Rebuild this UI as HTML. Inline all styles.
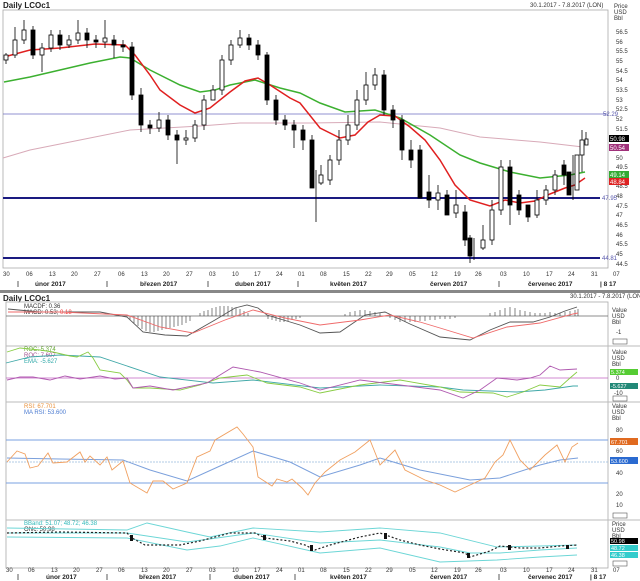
<!DOCTYPE html>
<html><head><meta charset="utf-8"><style>
html,body{margin:0;padding:0;background:#fff;width:640px;height:581px;overflow:hidden}
svg{display:block;font-family:"Liberation Sans",sans-serif}
.t{font-size:6px;fill:#333}
.h{font-size:8px;font-weight:bold;fill:#222}
.m{font-size:6.5px;font-weight:bold;fill:#222}
</style></head><body>
<svg width="640" height="581" viewBox="0 0 640 581" xmlns="http://www.w3.org/2000/svg">
<rect width="640" height="581" fill="#fff"/>
<!-- top header -->
<text x="3" y="8" class="h">Daily LCOc1</text>
<text x="530" y="7" class="t">30.1.2017 - 7.8.2017 (LON)</text>
<rect x="3" y="10" width="605" height="258" fill="none" stroke="#aaa" stroke-width="0.8"/>
<!-- right axis -->
<g class="t">
<text x="614" y="8">Price</text><text x="614" y="14">USD</text><text x="614" y="20">Bbl</text>
<text x="616" y="34">56.5</text><text x="616" y="44">56</text><text x="616" y="53">55.5</text><text x="616" y="63">55</text><text x="616" y="73">54.5</text><text x="616" y="82">54</text><text x="616" y="92">53.5</text><text x="616" y="102">53</text><text x="616" y="111">52.5</text><text x="616" y="121">52</text><text x="616" y="131">51.5</text><text x="616" y="140">51</text><text x="616" y="169">49.5</text><text x="616" y="160">50</text><text x="616" y="188">48.5</text><text x="616" y="198">48</text><text x="616" y="208">47.5</text><text x="616" y="217">47</text><text x="616" y="227">46.5</text><text x="616" y="237">46</text><text x="616" y="246">45.5</text><text x="616" y="256">45</text><text x="616" y="266">44.5</text>
</g>
<rect x="609" y="135" width="20" height="7" fill="#000"/><text x="610" y="141" style="font-size:6px;fill:#fff">50.98</text>
<rect x="609" y="144" width="20" height="7" fill="#a0307a"/><text x="610" y="150" style="font-size:6px;fill:#fff">50.54</text>
<rect x="609" y="171" width="20" height="7" fill="#3a3"/><text x="610" y="177" style="font-size:6px;fill:#fff">49.14</text>
<rect x="609" y="178" width="20" height="7" fill="#d22"/><text x="610" y="184" style="font-size:6px;fill:#fff">48.84</text>
<!-- horizontal lines -->
<line x1="3" y1="114" x2="608" y2="114" stroke="#6c6cc0" stroke-width="0.8"/>
<text x="603" y="116" style="font-size:6px;fill:#55a">52.29</text>
<line x1="3" y1="198" x2="600" y2="198" stroke="#1a1a80" stroke-width="2"/>
<text x="602" y="200" style="font-size:6px;fill:#55a">47.95</text>
<line x1="3" y1="258" x2="600" y2="258" stroke="#1a1a80" stroke-width="2"/>
<text x="602" y="260" style="font-size:6px;fill:#55a">44.81</text>
<!-- MAs -->
<polyline fill="none" stroke="#d8aab8" stroke-width="1" points="3,158 30,150 80,140 130,130 200,126 240,123 310,123 380,122 440,128 480,137 540,142 583,147"/>
<polyline fill="none" stroke="#3cb030" stroke-width="1.5" points="4,82 30,77 60,70 90,63 120,57 130,58 150,70 180,85 200,92 215,90 230,85 255,80 280,88 300,93 320,103 345,112 375,110 400,118 430,135 460,155 480,163 510,172 540,178 570,175 585,172"/>
<polyline fill="none" stroke="#e02020" stroke-width="1.5" points="4,57 30,50 60,48 95,44 125,45 135,55 150,75 160,90 180,105 195,113 210,108 230,92 245,81 258,78 270,85 290,98 300,103 320,128 340,138 355,135 368,122 380,115 395,116 410,127 425,140 440,160 455,185 470,200 490,206 505,200 520,203 535,201 550,194 565,188 575,185 585,178"/>
<!-- candles wicks -->
<path fill="none" stroke="#000" stroke-width="0.8" d="M6,53V64M15,27V58M24,20V44M33,26V59M42,43V72M51,30V52M60,30V50M69,35V48M78,20V44M87,28V48M96,35V48M105,20V48M114,35V58M123,40V52M132,42V100M141,88V132M150,120V134M159,112V132M168,115V140M177,130V164M186,130V145M195,120V142M204,95V130M213,85V96M222,55V95M231,40V65M240,30V48M249,34V50M258,40V60M267,52V105M276,95V125M285,115V130M294,120V148M303,125V150M312,135V175M316,170V222M321,165V185M330,155V185M339,130V165M348,115V145M357,90V130M366,72V105M375,68V90M384,70V115M393,105V128M402,115V160M411,140V168M420,145V185M429,175V208M438,185V210M447,190V210M456,190V218M465,205V246M470,235V263M474,238V260M483,225V250M492,200V245M501,160V215M510,160V225M519,190V215M528,205V222M537,190V218M546,185V205M555,170V195M564,160V185M573,155V200M582,130V172M586,132V145"/>
<g stroke="#000" stroke-width="0.8">
<rect x="4" y="55" width="4" height="5" fill="#fff"/>
<rect x="13" y="40" width="4" height="15" fill="#fff"/>
<rect x="22" y="30" width="4" height="10" fill="#fff"/>
<rect x="31" y="30" width="4" height="25" fill="#000"/>
<rect x="40" y="48" width="4" height="7" fill="#fff"/>
<rect x="49" y="35" width="4" height="13" fill="#fff"/>
<rect x="58" y="35" width="4" height="10" fill="#000"/>
<rect x="67" y="40" width="4" height="5" fill="#fff"/>
<rect x="76" y="33" width="4" height="7" fill="#fff"/>
<rect x="85" y="33" width="4" height="7" fill="#000"/>
<rect x="94" y="40" width="4" height="2" fill="#000"/>
<rect x="103" y="38" width="4" height="4" fill="#fff"/>
<rect x="112" y="40" width="4" height="5" fill="#000"/>
<rect x="121" y="45" width="4" height="2" fill="#000"/>
<rect x="130" y="47" width="4" height="48" fill="#000"/>
<rect x="139" y="95" width="4" height="30" fill="#000"/>
<rect x="148" y="125" width="4" height="3" fill="#000"/>
<rect x="157" y="120" width="4" height="8" fill="#fff"/>
<rect x="166" y="120" width="4" height="15" fill="#000"/>
<rect x="175" y="135" width="4" height="5" fill="#000"/>
<rect x="184" y="138" width="4" height="2" fill="#fff"/>
<rect x="193" y="125" width="4" height="13" fill="#fff"/>
<rect x="202" y="100" width="4" height="25" fill="#fff"/>
<rect x="211" y="90" width="4" height="10" fill="#fff"/>
<rect x="220" y="60" width="4" height="30" fill="#fff"/>
<rect x="229" y="45" width="4" height="15" fill="#fff"/>
<rect x="238" y="38" width="4" height="7" fill="#fff"/>
<rect x="247" y="38" width="4" height="7" fill="#000"/>
<rect x="256" y="45" width="4" height="10" fill="#000"/>
<rect x="265" y="55" width="4" height="45" fill="#000"/>
<rect x="274" y="100" width="4" height="20" fill="#000"/>
<rect x="283" y="120" width="4" height="5" fill="#000"/>
<rect x="292" y="125" width="4" height="5" fill="#000"/>
<rect x="301" y="130" width="4" height="10" fill="#000"/>
<rect x="310" y="140" width="4" height="48" fill="#000"/>
<rect x="319" y="175" width="4" height="8" fill="#fff"/>
<rect x="328" y="160" width="4" height="20" fill="#fff"/>
<rect x="337" y="140" width="4" height="20" fill="#fff"/>
<rect x="346" y="125" width="4" height="15" fill="#fff"/>
<rect x="355" y="100" width="4" height="25" fill="#fff"/>
<rect x="364" y="85" width="4" height="15" fill="#fff"/>
<rect x="373" y="75" width="4" height="10" fill="#fff"/>
<rect x="382" y="75" width="4" height="35" fill="#000"/>
<rect x="391" y="110" width="4" height="10" fill="#000"/>
<rect x="400" y="120" width="4" height="30" fill="#000"/>
<rect x="409" y="150" width="4" height="10" fill="#000"/>
<rect x="418" y="150" width="4" height="48" fill="#000"/>
<rect x="427" y="192" width="4" height="8" fill="#000"/>
<rect x="436" y="193" width="4" height="7" fill="#fff"/>
<rect x="445" y="195" width="4" height="20" fill="#000"/>
<rect x="454" y="205" width="4" height="8" fill="#fff"/>
<rect x="463" y="212" width="4" height="28" fill="#000"/>
<rect x="468" y="238" width="4" height="18" fill="#000"/>
<rect x="481" y="240" width="4" height="8" fill="#fff"/>
<rect x="490" y="210" width="4" height="30" fill="#fff"/>
<rect x="499" y="167" width="4" height="43" fill="#fff"/>
<rect x="508" y="167" width="4" height="38" fill="#000"/>
<rect x="517" y="195" width="4" height="15" fill="#000"/>
<rect x="526" y="205" width="4" height="12" fill="#000"/>
<rect x="535" y="200" width="4" height="15" fill="#fff"/>
<rect x="544" y="190" width="4" height="10" fill="#fff"/>
<rect x="553" y="175" width="4" height="15" fill="#fff"/>
<rect x="562" y="165" width="4" height="10" fill="#000"/>
<rect x="567" y="172" width="4" height="23" fill="#000"/>
<rect x="575" y="155" width="4" height="35" fill="#fff"/>
<rect x="580" y="140" width="4" height="15" fill="#fff"/>
<rect x="585" y="139" width="3" height="6" fill="#fff"/>
</g>
<!-- top date axis -->
<g class="t">
<text x="3" y="276">30</text><text x="26" y="276">06</text><text x="49" y="276">13</text><text x="71" y="276">20</text><text x="94" y="276">27</text><text x="118" y="276">06</text><text x="141" y="276">13</text><text x="163" y="276">20</text><text x="186" y="276">27</text><text x="209" y="276">03</text><text x="232" y="276">10</text><text x="254" y="276">17</text><text x="276" y="276">24</text><text x="298" y="276">01</text><text x="320" y="276">08</text><text x="343" y="276">15</text><text x="365" y="276">22</text><text x="386" y="276">29</text><text x="409" y="276">05</text><text x="431" y="276">12</text><text x="454" y="276">19</text><text x="475" y="276">26</text><text x="500" y="276">03</text><text x="523" y="276">10</text><text x="546" y="276">17</text><text x="568" y="276">24</text><text x="591" y="276">31</text><text x="613" y="276">07</text>
</g>
<g class="m">
<text x="35" y="286">únor 2017</text><text x="140" y="286">březen 2017</text><text x="235" y="286">duben 2017</text><text x="330" y="286">květen 2017</text><text x="430" y="286">červen 2017</text><text x="528" y="286">červenec 2017</text><text x="600" y="286">| 8 17</text>
</g>
<path stroke="#333" stroke-width="0.8" d="M18,281V287M107,281V287M208,281V287M298,281V287M499,281V287"/>
<rect x="0" y="290" width="640" height="3" fill="#888"/>
<!-- lower header -->
<text x="3" y="301" class="h">Daily LCOc1</text>
<text x="570" y="298" class="t">30.1.2017 - 7.8.2017 (LON)</text>
<rect x="6" y="302" width="602" height="266" fill="none" stroke="#aaa" stroke-width="0.8"/>
<line x1="6" y1="346" x2="640" y2="346" stroke="#bbb"/>
<line x1="6" y1="402" x2="640" y2="402" stroke="#bbb"/>
<line x1="6" y1="520" x2="640" y2="520" stroke="#bbb"/>
<!-- MACD -->
<text x="24" y="308" class="t">MACDF: 0.36</text>
<text x="24" y="314" class="t">MACD: 0.53; <tspan fill="#e33">0.18</tspan></text>
<line x1="6" y1="316" x2="608" y2="316" stroke="#666" stroke-width="0.8"/>
<path stroke="#333" stroke-width="0.6" d="M130,316V320M134,316V323M138,316V326M142,316V329M146,316V331M150,316V332M154,316V332M158,316V331M162,316V330M166,316V329M170,316V328M174,316V327M178,316V326M182,316V325M186,316V323M190,316V321M200,316V313M204,316V311M208,316V310M212,316V308M216,316V307M220,316V306M224,316V306M228,316V306M232,316V307M236,316V308M240,316V309M244,316V311M248,316V313M268,316V319M272,316V320M276,316V321M280,316V322M284,316V322M288,316V321M292,316V320M296,316V319M300,316V318M345,316V314M350,316V312M355,316V311M360,316V310M365,316V310M370,316V311M375,316V312M380,316V313M390,316V318M395,316V320M400,316V322M405,316V322M410,316V322M415,316V322M420,316V321M425,316V321M430,316V320M435,316V320M440,316V319M445,316V319M450,316V319M455,316V318M490,316V313M495,316V312M500,316V310M505,316V308M510,316V307M515,316V308M520,316V310M525,316V311M530,316V312M535,316V313M540,316V313M545,316V313M550,316V312M555,316V313M560,316V313M565,316V312M570,316V311M575,316V310M578,316V309"/>
<polyline fill="none" stroke="#555" stroke-width="0.9" points="8,309 40,312 100,312 127,317 143,332 165,335 187,336 215,320 235,308 247,305 258,308 267,315 300,325 320,333 340,332 365,315 385,312 410,324 440,337 470,340 490,330 510,322 533,322 550,317 565,311 577,307"/>
<polyline fill="none" stroke="#ef6a6a" stroke-width="0.9" points="8,312 60,312 127,315 160,327 193,333 225,320 253,310 285,318 320,325 360,320 390,315 420,322 440,328 473,338 507,327 540,323 573,314 578,313"/>
<g class="t"><text x="612" y="312">Value</text><text x="612" y="318">USD</text><text x="612" y="324">Bbl</text><text x="616" y="334">-1</text></g>
<rect x="613" y="339" width="14" height="5" fill="none" stroke="#555" stroke-width="0.6"/>
<!-- ROC -->
<g class="t"><text x="24" y="351" fill="#3a3" style="fill:#6a3">ROC: 5.374</text><text x="24" y="357" style="fill:#a05090">ROC: 7.607</text><text x="24" y="363" style="fill:#3aa">EMA: -5.627</text></g>
<line x1="6" y1="378" x2="608" y2="378" stroke="#c060c0" stroke-width="0.8"/>
<polyline fill="none" stroke="#40a8a8" stroke-width="0.9" points="6,363 30,357 60,355 100,357 160,377 213,383 253,380 320,388 380,385 440,387 463,390 517,392 545,390 573,386 578,386"/>
<polyline fill="none" stroke="#8c4" stroke-width="0.9" points="7,352 20,348 40,350 53,352 70,356 77,357 88,352 93,358 100,370 120,373 127,380 133,388 150,388 180,390 200,385 220,378 247,375 267,383 300,387 320,393 360,385 400,380 440,387 460,392 493,393 507,397 523,392 540,385 560,387 570,378 577,372"/>
<polyline fill="none" stroke="#b05ab0" stroke-width="0.9" points="7,380 20,377 33,377 50,380 65,376 80,379 100,376 115,379 127,378 133,388 150,386 173,390 207,383 233,367 260,372 300,383 320,390 360,380 400,385 440,390 463,398 480,390 497,378 517,380 530,378 540,375 550,366 560,370 577,369"/>
<g class="t"><text x="612" y="354">Value</text><text x="612" y="360">USD</text><text x="612" y="366">Bbl</text><text x="616" y="380">0</text><text x="614" y="395">-10</text></g>
<rect x="610" y="369" width="28" height="6" fill="#5c3"/><text x="611" y="374" style="font-size:5.5px;fill:#fff">5.374</text>
<rect x="610" y="383" width="28" height="6" fill="#287"/><text x="611" y="388" style="font-size:5.5px;fill:#fff">-5.627</text>
<rect x="613" y="396" width="14" height="5" fill="none" stroke="#555" stroke-width="0.6"/>
<!-- RSI -->
<g class="t"><text x="24" y="408" style="fill:#e8903a">RSI: 67.701</text><text x="24" y="414" style="fill:#4a7ad0">MA RSI: 53.600</text></g>
<line x1="6" y1="440" x2="608" y2="440" stroke="#7aa0e0" stroke-width="1"/>
<line x1="6" y1="462" x2="608" y2="462" stroke="#9bd" stroke-width="0.7" stroke-dasharray="2,1"/>
<line x1="6" y1="483" x2="608" y2="483" stroke="#7aa0e0" stroke-width="1"/>
<polyline fill="none" stroke="#7ba0dc" stroke-width="1" points="7,458 60,459 123,460 150,470 187,481 220,466 253,451 290,462 320,477 360,465 380,458 420,470 470,480 500,478 540,465 560,460 578,458"/>
<polyline fill="none" stroke="#f0a060" stroke-width="0.9" points="7,462 17,451 25,454 30,468 38,466 48,453 53,463 67,462 80,452 85,462 90,456 100,465 107,457 112,470 123,461 130,483 147,493 153,481 163,481 173,489 187,483 197,457 210,451 215,440 237,427 243,434 253,447 258,477 272,486 277,479 287,482 292,479 302,488 308,495 315,483 325,472 340,460 355,452 370,440 380,465 395,450 405,470 425,480 440,485 455,492 470,485 485,478 495,462 503,455 510,440 520,460 530,470 545,455 557,445 565,462 572,447 578,443"/>
<g class="t"><text x="612" y="408">Value</text><text x="612" y="414">USD</text><text x="612" y="420">Bbl</text><text x="616" y="432">80</text><text x="616" y="453">60</text><text x="616" y="475">40</text><text x="616" y="496">20</text><text x="616" y="507">10</text></g>
<rect x="610" y="438" width="28" height="7" fill="#e06a20"/><text x="611" y="444" style="font-size:5.5px;fill:#fff">67.701</text>
<rect x="610" y="457" width="28" height="7" fill="#2a6ad0"/><text x="611" y="463" style="font-size:5.5px;fill:#fff">53.600</text>
<rect x="613" y="513" width="14" height="5" fill="none" stroke="#555" stroke-width="0.6"/>
<!-- Bollinger -->
<g class="t"><text x="24" y="525" style="fill:#3bb">BBand: 51.07; 48.72; 46.38</text><text x="24" y="531">Ohlc: 50.98</text></g>
<polyline fill="none" stroke="#6cd6d6" stroke-width="0.9" points="7,528 127,530 147,523 187,532 210,537 253,528 320,532 380,528 440,533 497,547 540,546 577,545"/>
<polyline fill="none" stroke="#6cd6d6" stroke-width="0.9" points="7,533 127,533 187,542 217,538 253,533 320,543 380,540 440,547 470,553 500,553 540,550 577,548"/>
<polyline fill="none" stroke="#6cd6d6" stroke-width="0.9" points="7,537 127,538 187,550 220,546 253,538 320,553 380,548 440,562 497,560 540,557 577,555"/>
<polyline fill="none" stroke="#222" stroke-width="1.2" stroke-dasharray="2,2" points="7,533 60,532 127,533 132,538 145,545 180,545 200,541 230,533 255,533 265,538 290,541 305,545 315,550 330,545 360,537 380,533 400,540 420,545 440,549 465,553 470,557 490,551 500,546 520,548 540,548 560,546 578,545"/>
<g fill="#111"><rect x="130" y="535" width="3" height="6"/><rect x="263" y="535" width="3" height="5"/><rect x="310" y="545" width="3" height="6"/><rect x="384" y="533" width="3" height="6"/><rect x="467" y="553" width="3" height="5"/><rect x="508" y="545" width="3" height="5"/><rect x="566" y="545" width="3" height="4"/></g>
<g class="t"><text x="612" y="526">Price</text><text x="612" y="532">USD</text><text x="612" y="538">Bbl</text></g>
<rect x="610" y="538" width="28" height="6" fill="#000"/><text x="611" y="543" style="font-size:5.5px;fill:#fff">50.98</text>
<rect x="610" y="545" width="28" height="6" fill="#3cc"/><text x="611" y="550" style="font-size:5.5px;fill:#fff">48.72</text>
<rect x="610" y="552" width="28" height="6" fill="#3cc"/><text x="611" y="557" style="font-size:5.5px;fill:#fff">46.38</text>
<rect x="613" y="561" width="14" height="5" fill="none" stroke="#555" stroke-width="0.6"/>
<!-- bottom axis -->
<g class="t">
<text x="6" y="572">30</text><text x="28" y="572">06</text><text x="51" y="572">13</text><text x="73" y="572">20</text><text x="96" y="572">27</text><text x="118" y="572">06</text><text x="141" y="572">13</text><text x="163" y="572">20</text><text x="186" y="572">27</text><text x="209" y="572">03</text><text x="232" y="572">10</text><text x="254" y="572">17</text><text x="276" y="572">24</text><text x="298" y="572">01</text><text x="320" y="572">08</text><text x="343" y="572">15</text><text x="365" y="572">22</text><text x="386" y="572">29</text><text x="409" y="572">05</text><text x="431" y="572">12</text><text x="454" y="572">19</text><text x="475" y="572">26</text><text x="500" y="572">03</text><text x="523" y="572">10</text><text x="546" y="572">17</text><text x="568" y="572">24</text><text x="591" y="572">31</text><text x="613" y="572">07</text>
</g>
<g class="m">
<text x="46" y="579">únor 2017</text><text x="139" y="579">březen 2017</text><text x="234" y="579">duben 2017</text><text x="330" y="579">květen 2017</text><text x="430" y="579">červen 2017</text><text x="528" y="579">červenec 2017</text><text x="590" y="579">| 8 17</text>
</g>
<path stroke="#333" stroke-width="0.8" d="M18,574V580M107,574V580M210,574V580M295,574V580M499,574V580"/>
</svg>
</body></html>
